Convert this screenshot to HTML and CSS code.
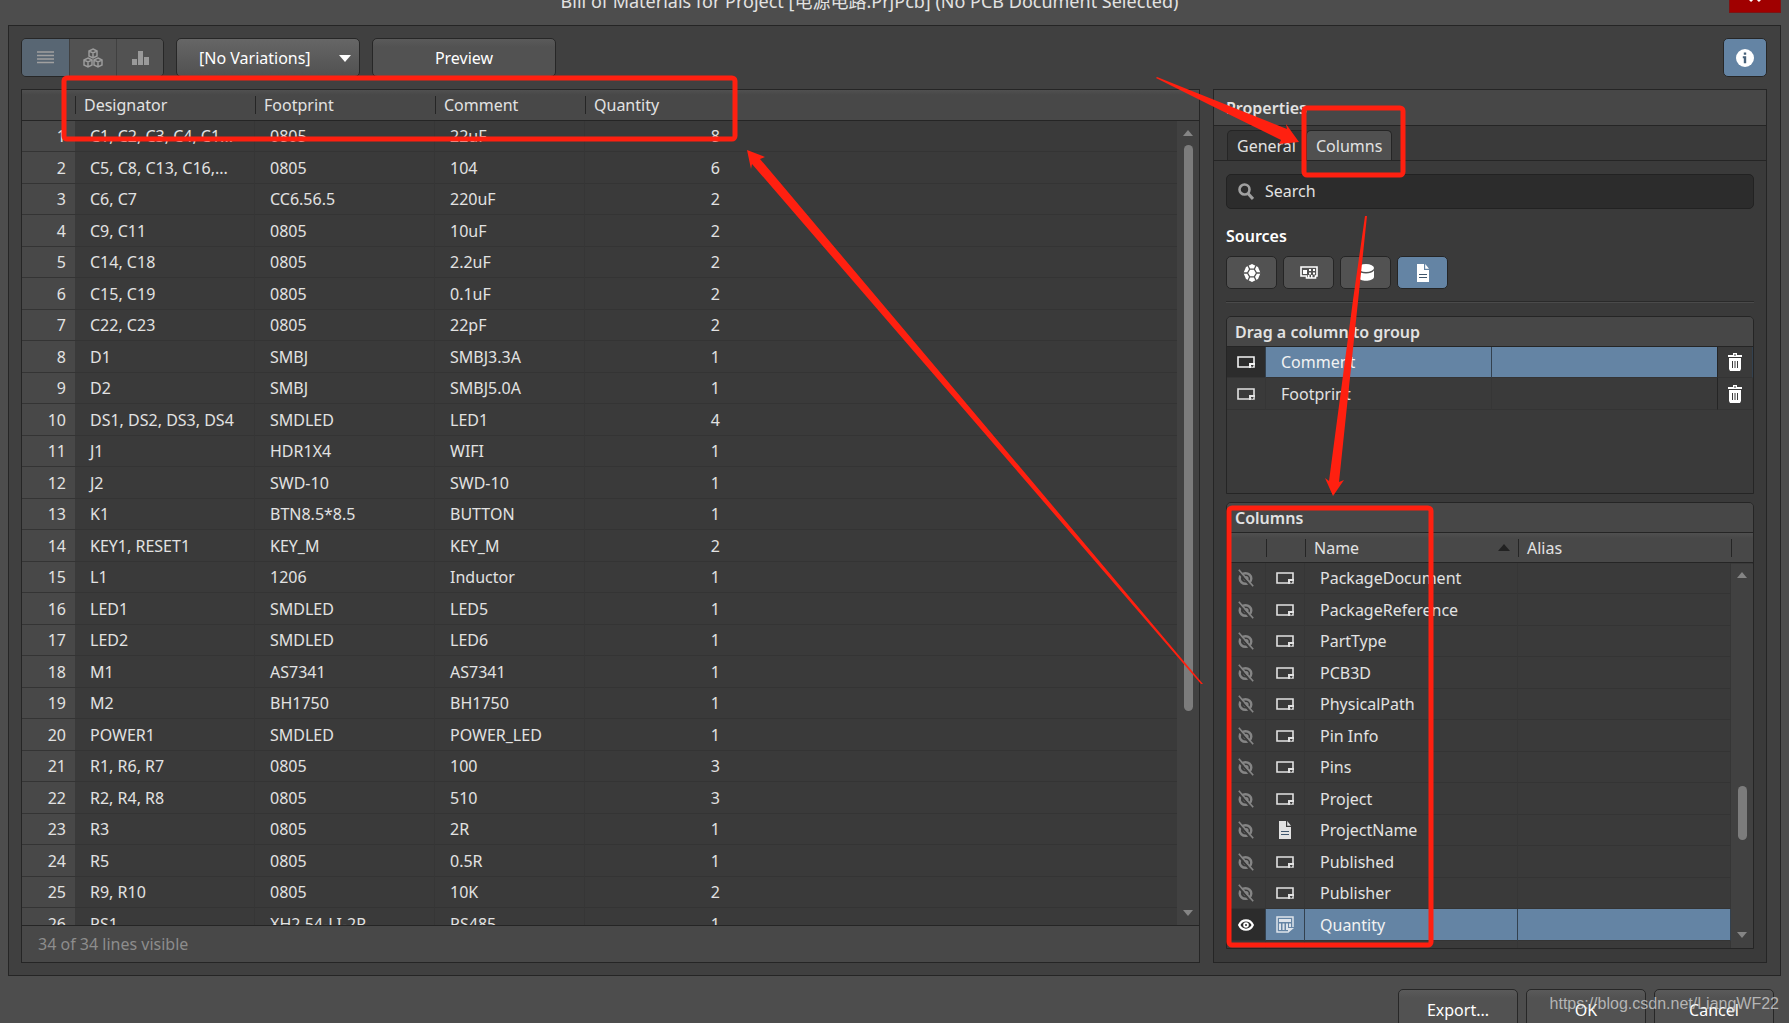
FILE: index.html
```html
<!DOCTYPE html>
<html lang="en">
<head>
<meta charset="utf-8">
<title>Bill of Materials</title>
<link rel="stylesheet" href="styles.css">
</head>
<body>
<svg class="defs" aria-hidden="true">
  <symbol id="param" viewBox="0 0 18 12"><path d="M1 1h16v10H1z" fill="none" stroke="currentColor" stroke-width="1.6"/><path d="M12 12V7h6v2h-4v3z" fill="currentColor"/><path d="M14.6 9.4h2.4l-2.4 2.2z" fill="#3a3a3a"/></symbol>
  <symbol id="hidden" viewBox="0 0 16 18"><ellipse cx="7.500" cy="9.500" rx="5.800" ry="5.300" fill="none" stroke="currentColor" stroke-width="2.400"/><circle cx="8" cy="9.500" r="2.600" fill="currentColor"/><path d="M0 2.500l13 15" stroke="#3a3a3a" stroke-width="2"/><path d="M.8.8l14.400 16.400" stroke="currentColor" stroke-width="1.700"/></symbol>
  <symbol id="doc" viewBox="0 0 12 18"><path d="M0 0h7v6h5v12H0z" fill="currentColor"/><path d="M8.200 0L12 4.800H8.200z" fill="currentColor"/><path d="M2 10.500h8M2 13.500h8" stroke="#3f566d" stroke-width="1.200"/></symbol>
  <symbol id="trash" viewBox="0 0 14 18"><path d="M5 0h4v2h5v2H0V2h5zM1 5h12v11l-1 2H2l-1-2z" fill="currentColor"/><path d="M4.500 8v7M7 8v7M9.500 8v7" stroke="#3a3a3a" stroke-width="1"/><path d="M6.500 1h1v2h-1z" fill="#3a3a3a"/></symbol>
</svg>

<header class="titlebar">
  <h1>Bill of Materials for Project [电源电路.PrjPcb] (No PCB Document Selected)</h1>
  <button class="close" aria-label="Close"><svg width="14" height="14" viewBox="0 0 14 14"><path d="M2 2l10 10M12 2L2 12" stroke="#fff" stroke-width="3"/></svg></button>
</header>

<main class="dialog">
  <div class="toolbar">
    <div class="views">
      <button class="on" aria-label="List view"><svg width="17" height="13" viewBox="0 0 17 13"><path d="M0 1h17M0 4.500h17M0 8h17M0 11.500h17" stroke="#a0a0a0" stroke-width="1.500"/></svg></button>
      <button aria-label="Component view"><svg width="20" height="20" viewBox="0 0 20 20"><g fill="none" stroke="#9a9a9a" stroke-width="1.500"><path d="M10 1l4 2v5l-4 2-4-2V3zM6 3l4 2 4-2M10 5v5"/><path d="M5 10l4 2v5l-4 2-4-2v-5zM1 12l4 2 4-2M5 14v5M15 10l4 2v5l-4 2-4-2v-5zM11 12l4 2 4-2M15 14v5"/></g></svg></button>
      <button aria-label="Chart view"><svg width="17" height="14" viewBox="0 0 17 14"><path d="M0 8h5v6H0zM6 0h5v14H6zM12 6h5v8h-5z" fill="#9a9a9a"/></svg></button>
    </div>
    <div class="variations">
      <select aria-label="Variations"><option>[No Variations]</option></select>
      <svg width="12" height="7" viewBox="0 0 12 7"><path d="M0 0h12L6 7z" fill="#fff"/></svg>
    </div>
    <button class="btn preview">Preview</button>
    <button class="info" aria-label="Properties panel"><svg width="18" height="18" viewBox="0 0 18 18"><circle cx="9" cy="9" r="9" fill="#fff"/><path d="M7.800 3.500h2.400v2.200H7.800zM6.800 7.200h3.400v7H7.800v-5h-1z" fill="#47617a"/></svg></button>
  </div>

  <div class="panes">
    <section class="bom">
      <div class="bom-view">
        <table class="bom-table">
          <colgroup><col class="c-num"><col class="c-wide"><col class="c-wide"><col class="c-mid"><col class="c-qty"><col></colgroup>
          <thead><tr><th></th><th><span>Designator</span></th><th><span>Footprint</span></th><th><span>Comment</span></th><th><span>Quantity</span></th><th></th></tr></thead>
          <tbody>
            <tr><td>1</td><td>C1, C2, C3, C4, C1...</td><td>0805</td><td>22uF</td><td>8</td><td></td></tr>
            <tr><td>2</td><td>C5, C8, C13, C16,...</td><td>0805</td><td>104</td><td>6</td><td></td></tr>
            <tr><td>3</td><td>C6, C7</td><td>CC6.56.5</td><td>220uF</td><td>2</td><td></td></tr>
            <tr><td>4</td><td>C9, C11</td><td>0805</td><td>10uF</td><td>2</td><td></td></tr>
            <tr><td>5</td><td>C14, C18</td><td>0805</td><td>2.2uF</td><td>2</td><td></td></tr>
            <tr><td>6</td><td>C15, C19</td><td>0805</td><td>0.1uF</td><td>2</td><td></td></tr>
            <tr><td>7</td><td>C22, C23</td><td>0805</td><td>22pF</td><td>2</td><td></td></tr>
            <tr><td>8</td><td>D1</td><td>SMBJ</td><td>SMBJ3.3A</td><td>1</td><td></td></tr>
            <tr><td>9</td><td>D2</td><td>SMBJ</td><td>SMBJ5.0A</td><td>1</td><td></td></tr>
            <tr><td>10</td><td>DS1, DS2, DS3, DS4</td><td>SMDLED</td><td>LED1</td><td>4</td><td></td></tr>
            <tr><td>11</td><td>J1</td><td>HDR1X4</td><td>WIFI</td><td>1</td><td></td></tr>
            <tr><td>12</td><td>J2</td><td>SWD-10</td><td>SWD-10</td><td>1</td><td></td></tr>
            <tr><td>13</td><td>K1</td><td>BTN8.5*8.5</td><td>BUTTON</td><td>1</td><td></td></tr>
            <tr><td>14</td><td>KEY1, RESET1</td><td>KEY_M</td><td>KEY_M</td><td>2</td><td></td></tr>
            <tr><td>15</td><td>L1</td><td>1206</td><td>Inductor</td><td>1</td><td></td></tr>
            <tr><td>16</td><td>LED1</td><td>SMDLED</td><td>LED5</td><td>1</td><td></td></tr>
            <tr><td>17</td><td>LED2</td><td>SMDLED</td><td>LED6</td><td>1</td><td></td></tr>
            <tr><td>18</td><td>M1</td><td>AS7341</td><td>AS7341</td><td>1</td><td></td></tr>
            <tr><td>19</td><td>M2</td><td>BH1750</td><td>BH1750</td><td>1</td><td></td></tr>
            <tr><td>20</td><td>POWER1</td><td>SMDLED</td><td>POWER_LED</td><td>1</td><td></td></tr>
            <tr><td>21</td><td>R1, R6, R7</td><td>0805</td><td>100</td><td>3</td><td></td></tr>
            <tr><td>22</td><td>R2, R4, R8</td><td>0805</td><td>510</td><td>3</td><td></td></tr>
            <tr><td>23</td><td>R3</td><td>0805</td><td>2R</td><td>1</td><td></td></tr>
            <tr><td>24</td><td>R5</td><td>0805</td><td>0.5R</td><td>1</td><td></td></tr>
            <tr><td>25</td><td>R9, R10</td><td>0805</td><td>10K</td><td>2</td><td></td></tr>
            <tr><td>26</td><td>RS1</td><td>XH2.54-LI-2P</td><td>RS485</td><td>1</td><td></td></tr>
          </tbody>
        </table>
        <div class="scroll bom-scroll"><i class="up"></i><b></b><i class="down"></i></div>
      </div>
      <div class="status">34 of 34 lines visible</div>
    </section>

    <aside class="props">
      <h2>Properties</h2>
      <nav class="tabs"><button>General</button><button class="active">Columns</button></nav>
      <div class="props-body">
        <div class="search">
          <svg width="16" height="17" viewBox="0 0 16 17"><circle cx="6.500" cy="6.500" r="5" fill="none" stroke="#a0a0a0" stroke-width="2.600"/><path d="M10 10.500l5 5.500" stroke="#a0a0a0" stroke-width="3"/></svg>
          <input type="text" placeholder="Search" aria-label="Search">
        </div>
        <h3>Sources</h3>
        <div class="sources">
          <button aria-label="Altium parameters"><svg width="18" height="18" viewBox="0 0 18 18"><path d="M9 0l6 3 2.500 6L15 15l-6 3-6-3L.5 9 3 3z" fill="#fff"/><g fill="none" stroke="#505050" stroke-width="1.300"><path d="M6.700 5.200h4.600L13.500 9l-2.200 3.800H6.700L4.500 9zM6.700 5.200L5 1.500M11.300 5.200L13 1.500M13.500 9H18M4.500 9H0M6.700 12.800L5 16.500M11.300 12.800L13 16.500"/></g></svg></button>
          <button aria-label="PCB parameters"><svg width="18" height="13" viewBox="0 0 18 13"><path d="M1 1h16v9h-1.500v2h-9v-2H1z" fill="none" stroke="#fff" stroke-width="1.600"/><path d="M3 4h4v4H3zM9 3h2v2H9zM13 3h2v2h-2zM9 6.500h2v2H9zM13 6.500h2v2h-2zM8 9h1.500v3H8zM11 9h1.500v3H11z" fill="#fff"/></svg></button>
          <button aria-label="Database parameters"><svg width="16" height="17" viewBox="0 0 16 17"><ellipse cx="8" cy="4" rx="8" ry="4" fill="#fff"/><path d="M0 6.500c2 4 14 4 16 0V13c-1 5-15 5-16 0z" fill="#fff"/></svg></button>
          <button class="on" aria-label="Document parameters"><svg width="12" height="18"><use href="#doc"/></svg></button>
        </div>
        <hr>
        <section class="box group-box">
          <h4>Drag a column to group</h4>
          <table class="group-table">
            <colgroup><col class="c-icon"><col><col><col class="c-trash"></colgroup>
            <tbody>
            <tr class="sel"><td><svg width="18" height="12"><use href="#param"/></svg></td><td>Comment</td><td></td><td><button aria-label="Remove Comment"><svg width="14" height="18"><use href="#trash"/></svg></button></td></tr>
            <tr><td><svg width="18" height="12"><use href="#param"/></svg></td><td>Footprint</td><td></td><td><button aria-label="Remove Footprint"><svg width="14" height="18"><use href="#trash"/></svg></button></td></tr>
            </tbody>
          </table>
        </section>
        <section class="box columns-box">
          <h4>Columns</h4>
          <div class="columns-view">
          <table class="columns-table">
            <colgroup><col class="c-icon"><col class="c-icon"><col><col><col class="c-bar"></colgroup>
            <thead><tr><th></th><th><span></span></th><th><span>Name <svg width="12" height="7" viewBox="0 0 12 7"><path d="M0 7h12L6 0z" fill="#222"/></svg></span></th><th><span>Alias</span></th><th><span></span></th></tr></thead>
            <tbody>
            <tr><td><svg width="16" height="18"><use href="#hidden"/></svg></td><td><svg width="18" height="12"><use href="#param"/></svg></td><td>PackageDocument</td><td></td><td></td></tr>
            <tr><td><svg width="16" height="18"><use href="#hidden"/></svg></td><td><svg width="18" height="12"><use href="#param"/></svg></td><td>PackageReference</td><td></td><td></td></tr>
            <tr><td><svg width="16" height="18"><use href="#hidden"/></svg></td><td><svg width="18" height="12"><use href="#param"/></svg></td><td>PartType</td><td></td><td></td></tr>
            <tr><td><svg width="16" height="18"><use href="#hidden"/></svg></td><td><svg width="18" height="12"><use href="#param"/></svg></td><td>PCB3D</td><td></td><td></td></tr>
            <tr><td><svg width="16" height="18"><use href="#hidden"/></svg></td><td><svg width="18" height="12"><use href="#param"/></svg></td><td>PhysicalPath</td><td></td><td></td></tr>
            <tr><td><svg width="16" height="18"><use href="#hidden"/></svg></td><td><svg width="18" height="12"><use href="#param"/></svg></td><td>Pin Info</td><td></td><td></td></tr>
            <tr><td><svg width="16" height="18"><use href="#hidden"/></svg></td><td><svg width="18" height="12"><use href="#param"/></svg></td><td>Pins</td><td></td><td></td></tr>
            <tr><td><svg width="16" height="18"><use href="#hidden"/></svg></td><td><svg width="18" height="12"><use href="#param"/></svg></td><td>Project</td><td></td><td></td></tr>
            <tr><td><svg width="16" height="18"><use href="#hidden"/></svg></td><td><svg width="12" height="18"><use href="#doc"/></svg></td><td>ProjectName</td><td></td><td></td></tr>
            <tr><td><svg width="16" height="18"><use href="#hidden"/></svg></td><td><svg width="18" height="12"><use href="#param"/></svg></td><td>Published</td><td></td><td></td></tr>
            <tr><td><svg width="16" height="18"><use href="#hidden"/></svg></td><td><svg width="18" height="12"><use href="#param"/></svg></td><td>Publisher</td><td></td><td></td></tr>
            <tr class="sel"><td><svg width="16" height="12" viewBox="0 0 16 12"><path d="M1.200 6C4-.3 12-.3 14.800 6 12 12.300 4 12.300 1.200 6z" fill="none" stroke="#fff" stroke-width="2.200"/><circle cx="8" cy="6" r="2.800" fill="#fff"/><circle cx="8" cy="6" r="1" fill="#333"/></svg></td><td><svg width="18" height="17" viewBox="0 0 18 17"><path d="M12 16H1V1h16v10" fill="none" stroke="#dde3ea" stroke-width="1.500"/><path d="M3 3h12v3H3zM3 7.500h2V14H3zM6.500 7.500h2V14h-2zM10 7.500h2V14h-2zM13 7.500h2V11h-2zM12 12h6l-6 5z" fill="#dde3ea"/></svg></td><td>Quantity</td><td></td><td></td></tr>
            <tr><td></td><td></td><td></td><td></td><td></td></tr>
            </tbody>
          </table>
          <div class="scroll columns-scroll"><i class="up"></i><b></b><i class="down"></i></div>
          </div>
        </section>
      </div>
    </aside>
  </div>
</main>

<footer class="actions">
  <button class="btn">Export...</button><button class="btn">OK</button><button class="btn">Cancel</button>
  <span class="watermark">https://blog.csdn.net/LiangWF22</span>
</footer>

<svg class="marks" viewBox="0 0 1789 1023" preserveAspectRatio="none" aria-hidden="true">
  <g fill="none" stroke="#ff2010" stroke-width="5">
    <rect x="64" y="78" width="671" height="61" rx="3"/>
    <rect x="1304" y="108" width="99" height="67" rx="3"/>
    <rect x="1229" y="508" width="202" height="437" rx="3"/>
  </g>
  <g fill="#ff2010">
    <path d="M1156 78l1-1 55 22 75 30-1-5 13 18-20 2 2-4-71-35z"/>
    <path d="M1365 216h2L1339 482l5-2-11 16-8-18 4 3 24-181z"/>
    <path d="M747 150l18 7-5 2 60 71 383 454h-2L809 230l-57-66-1 5z"/>
  </g>
</svg>
</body>
</html>
```
FILE: styles.css
```css
* { box-sizing: border-box; }
body {
  margin: 0;
  height: 100vh;
  display: flex;
  flex-direction: column;
  overflow: hidden;
  position: relative;
  background: #4d4d4d;
  color: #e2e2e2;
  font: 16px/20px "Noto Sans", "Noto Sans CJK SC", sans-serif;
}
button, input, select { font: inherit; color: inherit; margin: 0; }
button { padding: 0; border: 0; background: none; }
h1, h2, h3, h4 { margin: 0; font-size: 16px; font-weight: 600; }
.defs { position: absolute; width: 0; height: 0; }
svg { display: block; }

.titlebar { height: 25px; flex: none; position: relative; overflow: hidden; text-align: center; }
.titlebar h1 {
  margin: -13px 52px 0;
  padding-right: 50px;
  font-size: 18px;
  line-height: 28px;
  font-weight: 400;
  white-space: nowrap;
}
.close {
  position: absolute;
  right: 8px;
  top: -20px;
  width: 52px;
  height: 33px;
  display: grid;
  place-items: end center;
  padding-bottom: 9px;
  background: #a00000;
  border: 1px solid #7c1414;
}

.dialog {
  flex: 1;
  min-height: 0;
  margin: 0 8px;
  padding: 12px 13px 12px 12px;
  display: flex;
  flex-direction: column;
  gap: 12px;
  background: #404040;
  border: 1px solid #252525;
}
.toolbar { display: flex; height: 39px; flex: none; gap: 12px; }
.views { display: flex; border: 1px solid #272727; border-radius: 5px; overflow: hidden; }
.views button { width: 47px; display: grid; place-items: center; background: #525252; border-left: 1px solid #404040; }
.views button.on { background: #586673; border-left: 0; }
.variations { position: relative; width: 184px; }
.variations select {
  width: 100%;
  height: 100%;
  appearance: none;
  padding: 0 22px;
  color: #fff;
  background: linear-gradient(#666, #515151);
  border: 1px solid #272727;
  border-radius: 5px;
}
.variations svg { position: absolute; right: 9px; top: 17px; pointer-events: none; }
.btn {
  color: #fff;
  background: linear-gradient(#5a5a5a, #525252 8px);
  border: 1px solid #272727;
  border-radius: 5px;
}
.preview { width: 184px; }
.info {
  width: 44px;
  margin-left: auto;
  display: grid;
  place-items: center;
  background: #6484a4;
  border: 1px solid #272727;
  border-radius: 5px;
}

.panes { flex: 1; min-height: 0; display: flex; gap: 13px; }
.bom { flex: 1; min-width: 0; display: flex; flex-direction: column; }
.bom-view { flex: 1; min-height: 0; overflow: hidden; position: relative; background: #3a3a3a; border: 1px solid #252525; }
.status { height: 37px; flex: none; padding: 0 16px; line-height: 37px; color: #8d8d8d; background: #484848; border: 1px solid #252525; border-top: 0; }

table { width: 100%; table-layout: fixed; border-collapse: separate; border-spacing: 0; }
th, td { padding: 0; font-weight: 400; text-align: left; white-space: nowrap; }
thead th { height: 31px; background: linear-gradient(#505050, #484848 5px); border-bottom: 1px solid #252525; }
th span { display: flex; align-items: center; justify-content: space-between; height: 18px; line-height: 18px; padding: 0 8px; border-left: 1px solid #252525; }
tbody td { height: 32px; border-bottom: 1px solid #343434; border-right: 1px solid #363636; }
tbody tr:nth-child(odd) td { height: 31px; }
.c-num { width: 53px; }
.c-wide { width: 180px; }
.c-mid { width: 150px; }
.c-qty { width: 145px; }
.bom-table td { padding-left: 15px; }
.bom-table td:first-child { background: #484848; text-align: right; padding: 0 9px 0 0; border-right: 0; }
.bom-table td:nth-child(5) { text-align: right; padding-right: 10px; border-right: 0; }
.bom-table td:last-child { border-right: 0; }

.scroll { position: absolute; right: 0; top: 31px; bottom: 0; width: 22px; display: flex; flex-direction: column; align-items: center; background: #414141; }
.scroll i { border: 5px solid transparent; border-top-width: 0; border-bottom: 6px solid #858585; }
.scroll .down { border-bottom-width: 0; border-top: 6px solid #858585; margin-top: auto; }
.scroll b { width: 9px; border-radius: 5px; background: #7c7c7c; }
.bom-scroll { padding: 9px 0; }
.bom-scroll b { height: 72%; margin-top: 9px; }
.columns-scroll { padding: 8px 0 10px; }
.columns-scroll b { height: 54px; margin-top: 208px; }

.props { width: 554px; flex: none; display: flex; flex-direction: column; background: #3a3a3a; border: 1px solid #252525; }
.props h2 { height: 36px; flex: none; padding-left: 12px; line-height: 36px; background: #474747; border-bottom: 1px solid #252525; }
.tabs { height: 35px; flex: none; display: flex; padding: 4px 13px 0; border-bottom: 1px solid #252525; }
.tabs button { height: 30px; padding: 0 9px; background: #333; border: 1px solid #252525; border-bottom: 0; border-radius: 5px 5px 0 0; }
.tabs .active { background: #505050; }
.props-body { flex: 1; min-height: 0; display: flex; flex-direction: column; padding: 13px 12px; }
.search { height: 35px; flex: none; display: flex; align-items: center; gap: 11px; padding: 0 11px; background: #2c2c2c; border: 1px solid #222; border-radius: 5px; }
.search input { flex: 1; min-width: 0; height: 30px; padding: 0 0 2px; background: none; border: 0; outline: 0; }
.search input::placeholder { color: #e2e2e2; opacity: 1; }
.props h3 { margin: 17px 0 10px; color: #fff; }
.sources { display: flex; gap: 6px; }
.sources button { width: 51px; height: 33px; display: grid; place-items: center; background: #525252; border: 1px solid #252525; border-radius: 5px; }
.sources .on { color: #fff; background: #6484a4; }
hr { width: 100%; height: 2px; margin: 12px 0 13px; border: 0; border-top: 1px solid #2a2a2a; background: #4a4a4a; }
.box { border: 1px solid #252525; border-radius: 5px 5px 0 0; overflow: hidden; }
.box h4 { height: 30px; line-height: 30px; padding-left: 8px; background: #474747; border-bottom: 1px solid #252525; }
.group-box { height: 178px; flex: none; margin-bottom: 8px; }
.columns-box { flex: 1; min-height: 0; display: flex; flex-direction: column; }
.columns-box h4 { flex: none; }
.columns-view { flex: 1; min-height: 0; position: relative; overflow: hidden; }
.columns-table thead th { height: 30px; }
.c-icon { width: 39px; }
.c-trash { width: 35px; }
.c-bar { width: 22px; }
.props td { padding-left: 15px; }
.props td svg { margin: 0 auto; }
.props td button { display: block; width: 100%; color: #fff; }
.group-table td:first-child, .group-table td:last-child,
.columns-table td:nth-child(-n+2) { padding: 0; }
.group-table td:nth-child(3) { border-right-color: #252525; }
.columns-table td:first-child { color: #858585; }
.sel td { background: #6484a4; border-right-color: #33414f; color: #f2f2f2; }
.sel td:first-child { background: #2c2c2c; }
.group-table .sel td:last-child { background: #3a3a3a; }

.actions { height: 47px; flex: none; display: flex; justify-content: flex-end; gap: 8px; padding: 13px 15px 0 0; position: relative; overflow: hidden; }
.actions .btn { width: 120px; height: 42px; flex: none; }
.watermark { position: absolute; right: 10px; top: 18px; color: rgba(215, 215, 215, .75); font: 16px/20px "Liberation Sans", Arial, sans-serif; }
.marks { position: absolute; inset: 0; width: 100%; height: 100%; pointer-events: none; }
```
